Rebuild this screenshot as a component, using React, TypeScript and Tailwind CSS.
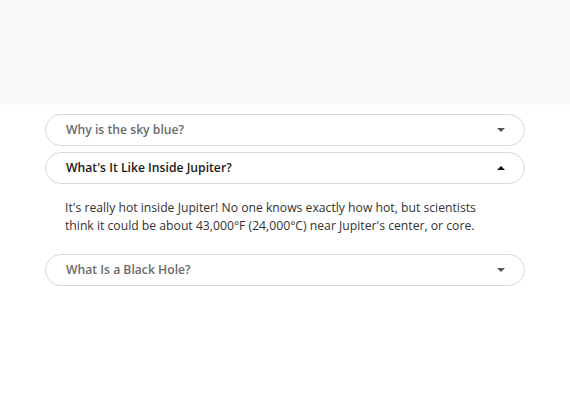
import React, { useState } from 'react';

const items = [
  {
    q: 'Why is the sky blue?',
    a: 'Sunlight reaches Earth\'s atmosphere and is scattered in all directions by all the gases and particles in the air.',
  },
  {
    q: "What's It Like Inside Jupiter?",
    a: "It's really hot inside Jupiter! No one knows exactly how hot, but scientists think it could be about 43,000°F (24,000°C) near Jupiter's center, or core.",
  },
  {
    q: 'What Is a Black Hole?',
    a: 'A black hole is an area of such immense gravity that nothing -- not even light -- can escape from it.',
  },
];

const Caret = ({ up }: { up: boolean }) => (
  <svg width="8" height="4" viewBox="0 0 8 4" className={up ? 'rotate-180' : ''}>
    <path d="M0 0h8L4 4z" fill={up ? '#111' : '#555'} />
  </svg>
);

export default function App() {
  const [open, setOpen] = useState(1);

  return (
    <div className="min-h-[414px] bg-white" style={{ fontFamily: '"Open Sans", "Noto Sans", sans-serif' }}>
      <div className="h-[105px] bg-[#fafafa]" />
      <div className="mx-[45px] mt-[9px] flex flex-col gap-[6px]">
        {items.map((item, i) => {
          const isOpen = open === i;
          return (
            <div key={item.q}>
              <button
                onClick={() => setOpen(isOpen ? -1 : i)}
                className="flex h-8 w-full items-center justify-between rounded-full border border-[#d9d9d9] bg-white pl-[20px] pr-[19px] text-left"
              >
                <span className={`text-[12.2px] font-semibold ${isOpen ? 'text-[#1a1a1a]' : 'text-[#6b6b6b]'}`}>{item.q}</span>
                <Caret up={isOpen} />
              </button>
              {isOpen && (
                <p className="px-[20px] pt-[15px] pb-[13px] text-[12.2px] leading-[18px] text-[#333]">{item.a}</p>
              )}
            </div>
          );
        })}
      </div>
    </div>
  );
}
